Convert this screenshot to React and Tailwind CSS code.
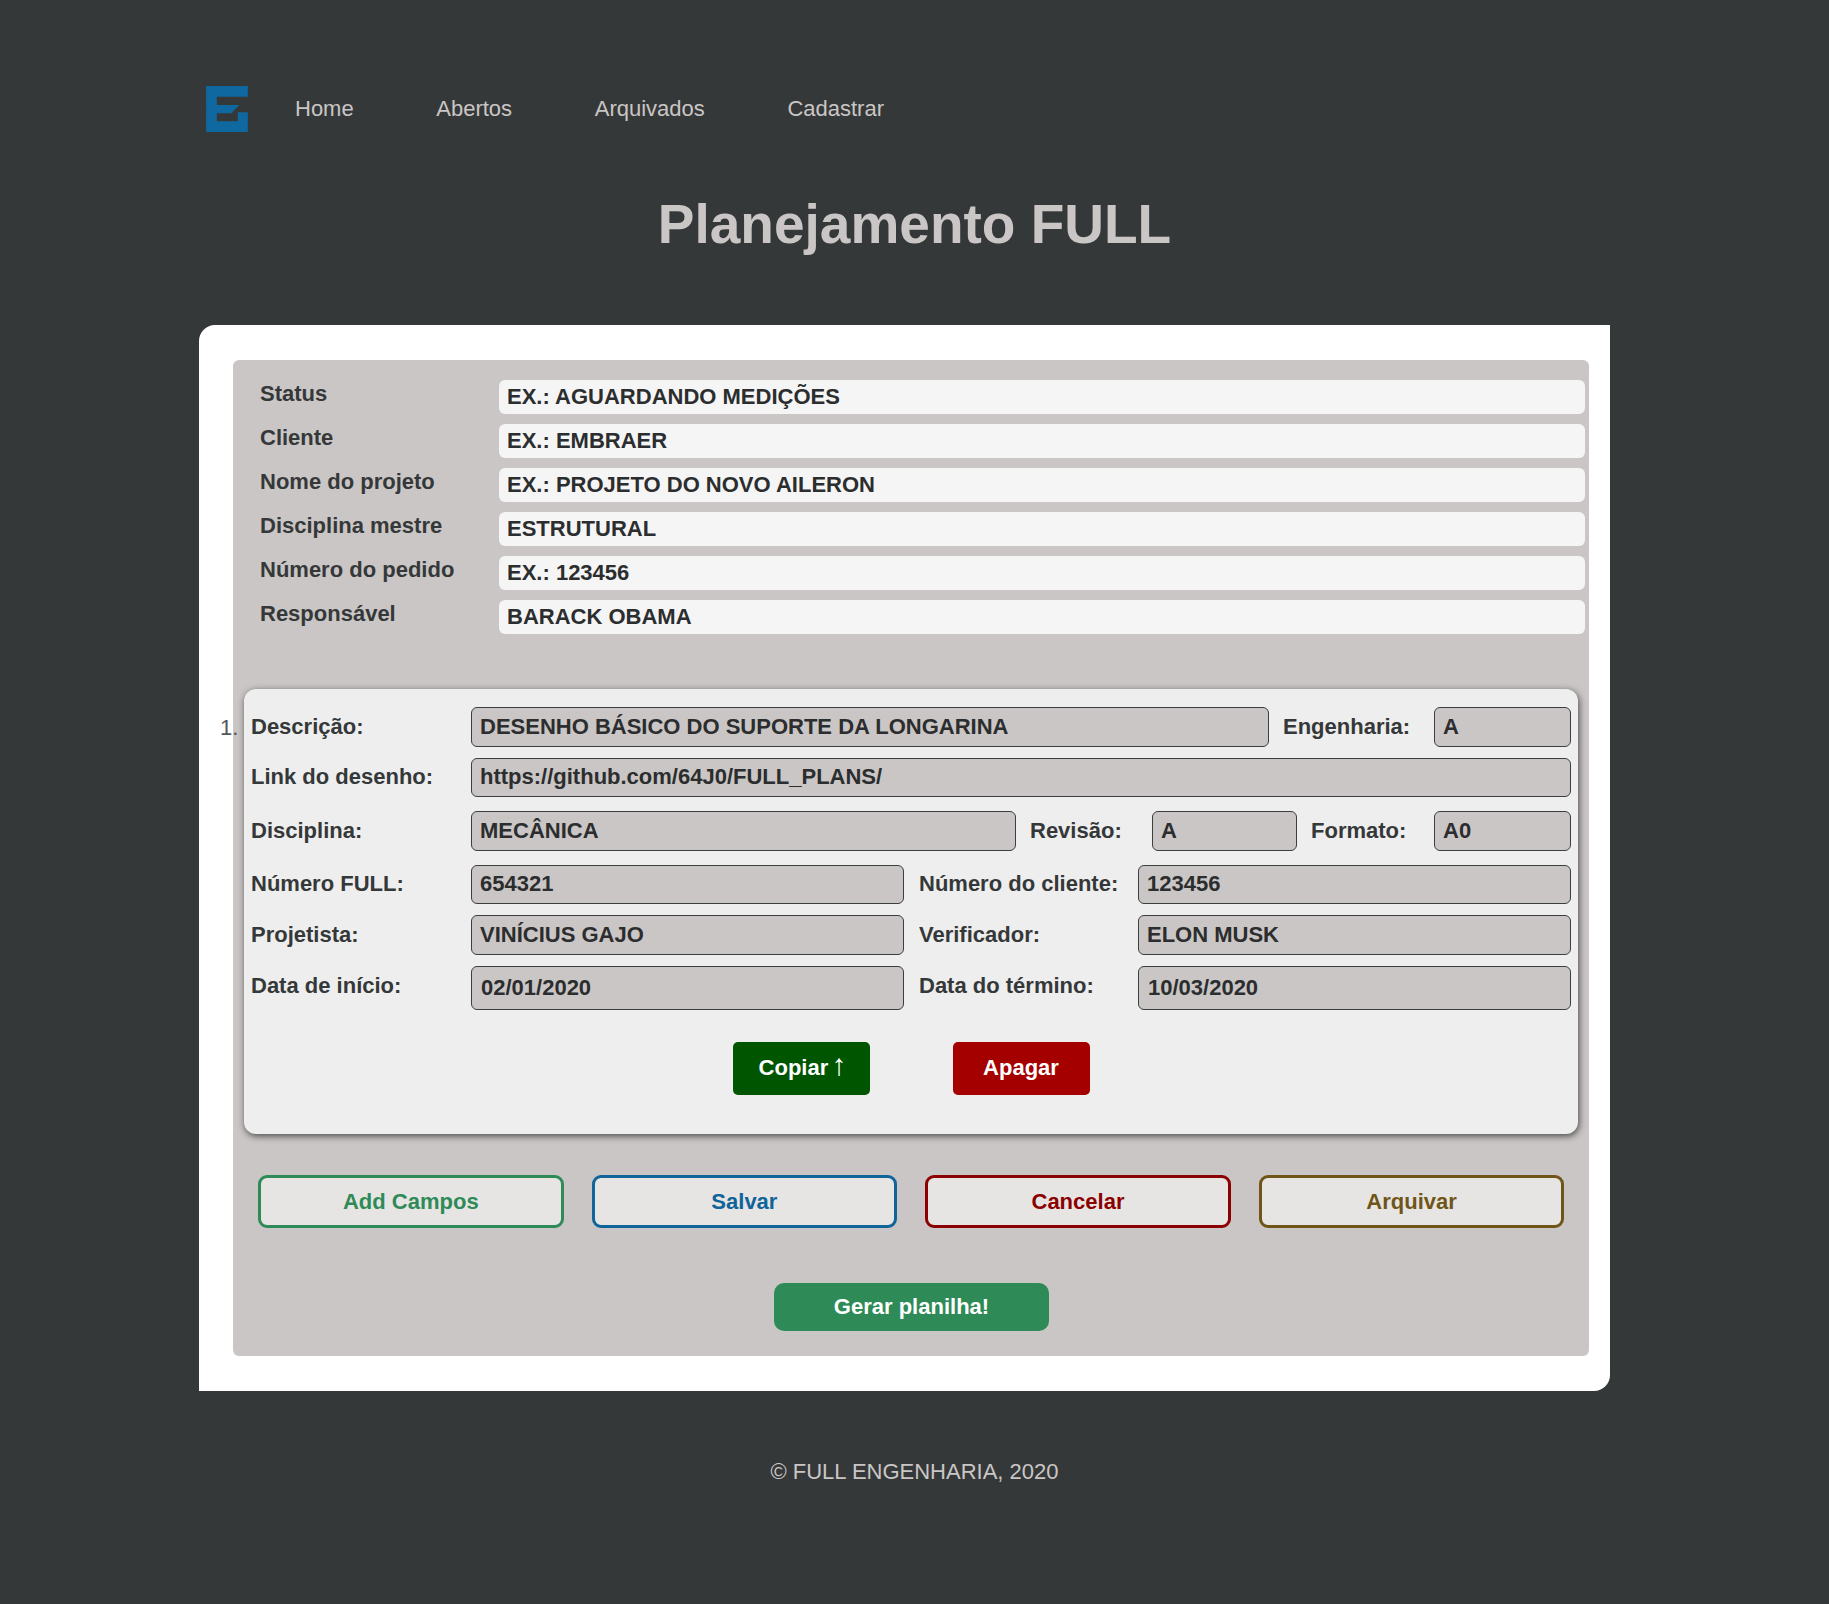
const statusRows = [
  ["Status", "EX.: AGUARDANDO MEDIÇÕES"],
  ["Cliente", "EX.: EMBRAER"],
  ["Nome do projeto", "EX.: PROJETO DO NOVO AILERON"],
  ["Disciplina mestre", "ESTRUTURAL"],
  ["Número do pedido", "EX.: 123456"],
  ["Responsável", "BARACK OBAMA"],
];

const navLinks = ["Home", "Abertos", "Arquivados", "Cadastrar"];

function Logo() {
  return (
    <svg width="42" height="46" viewBox="0 0 125 138" className="shrink-0">
      <path
        fill="#0f689f"
        d="M0 0H125V32H32V106H95V79H125V138H0Z M32 57H100L75 82H32Z"
      />
    </svg>
  );
}

function Box({ className = "", children }) {
  return (
    <div className={`flex items-center rounded-[6px] border border-[#3c3f40] bg-[#cac6c5] pb-[2px] pl-2 text-[#2b2d2e] ${className}`}>
      {children}
    </div>
  );
}

function Label({ className = "", children }) {
  return <span className={`shrink-0 pb-[2px] text-[#353839] ${className}`}>{children}</span>;
}

function OutlineButton({ className = "", children }) {
  return (
    <button className={`h-[53px] w-[305.6px] rounded-[9px] border-[3px] bg-[#e7e5e4] font-bold ${className}`}>
      {children}
    </button>
  );
}

export default function App() {
  return (
    <div className="min-h-[1604px] bg-[#353839] text-[22px] text-[#cac6c5] [font-family:'Liberation_Sans',Arial,sans-serif]">
      <header className="flex items-center pl-[206px] pt-[86px]">
        <Logo />
        <nav className="ml-[47px] flex gap-[82.6px] pb-[2px]">
          {navLinks.map((link) => (
            <a key={link} href="#" className="text-[#cac6c5]">{link}</a>
          ))}
        </nav>
      </header>

      <h1 className="mt-[59px] h-[66px] text-center text-[55px] font-bold leading-[66px]">
        Planejamento FULL
      </h1>

      <main className="ml-[199px] mt-[68px] w-[1411px] rounded-tl-[16px] rounded-br-[16px] bg-white pb-[35px] pl-[34px] pr-[21px] pt-[35px]">
        <section className="rounded-[6px] bg-[#cac6c5] pb-[25px] pl-[25px] pr-[4px] pt-[20px] font-bold">
          {/* Dados do projeto */}
          <div className="flex flex-col gap-[10px] pl-[2px]">
            {statusRows.map(([label, value]) => (
              <div key={label} className="flex items-start">
                <span className="w-[239px] shrink-0 text-[#353839] leading-[28px]">{label}</span>
                <div className="flex h-[34px] flex-1 items-center rounded-[6px] bg-[#f5f5f5] pb-[2px] pl-2 text-[#2b2d2e]">
                  {value}
                </div>
              </div>
            ))}
          </div>

          {/* Desenho 1 */}
          <div className="relative -ml-[14px] mr-[7px] mt-[55px] rounded-[12px] bg-[#eeeeee] pb-[39px] pl-[7px] pr-[7px] pt-[18px] shadow-[1px_2px_7px_rgba(0,0,0,0.65)]">
            <span className="absolute -left-[24px] top-[22px] font-normal text-[#55585a]">1.</span>

            <div className="flex h-[40px] items-center">
              <Label className="w-[220px]">Descrição:</Label>
              <Box className="h-full w-[798px]">DESENHO BÁSICO DO SUPORTE DA LONGARINA</Box>
              <Label className="ml-[14px] w-[151px]">Engenharia:</Label>
              <Box className="h-full flex-1">A</Box>
            </div>

            <div className="mt-[11px] flex h-[39px] items-center">
              <Label className="w-[220px]">Link do desenho:</Label>
              <Box className="h-full flex-1">https://github.com/64J0/FULL_PLANS/</Box>
            </div>

            <div className="mt-[14px] flex h-[40px] items-center">
              <Label className="w-[220px]">Disciplina:</Label>
              <Box className="h-full w-[545px]">MECÂNICA</Box>
              <Label className="ml-[14px] w-[122px]">Revisão:</Label>
              <Box className="h-full w-[145px]">A</Box>
              <Label className="ml-[14px] w-[123px]">Formato:</Label>
              <Box className="h-full flex-1">A0</Box>
            </div>

            <div className="mt-[14px] flex h-[39px] items-center">
              <Label className="w-[220px]">Número FULL:</Label>
              <Box className="h-full w-[433px]">654321</Box>
              <Label className="ml-[15px] w-[219px]">Número do cliente:</Label>
              <Box className="h-full flex-1">123456</Box>
            </div>

            <div className="mt-[11px] flex h-[40px] items-center">
              <Label className="w-[220px]">Projetista:</Label>
              <Box className="h-full w-[433px]">VINÍCIUS GAJO</Box>
              <Label className="ml-[15px] w-[219px]">Verificador:</Label>
              <Box className="h-full flex-1">ELON MUSK</Box>
            </div>

            <div className="mt-[11px] flex h-[44px] items-start">
              <Label className="w-[220px] leading-[39px]">Data de início:</Label>
              <Box className="h-full w-[433px] pl-[9px]">02/01/2020</Box>
              <Label className="ml-[15px] w-[219px] leading-[39px]">Data do término:</Label>
              <Box className="h-full flex-1 pl-[9px]">10/03/2020</Box>
            </div>

            <div className="mt-[32px] flex justify-center gap-[83px]">
              <button className="h-[53px] w-[137px] rounded-[5px] bg-[#005500] pb-[2px] font-bold text-white">
                Copiar <span className="-mx-[3px] inline-block text-[30px] font-normal leading-[0]">↑</span>
              </button>
              <button className="h-[53px] w-[137px] rounded-[5px] bg-[#a50000] pb-[2px] font-bold text-white">Apagar</button>
            </div>
          </div>

          <div className="mt-[41px] flex gap-[28px]">
            <OutlineButton className="border-[#2e8b57] text-[#2e8b57]">Add Campos</OutlineButton>
            <OutlineButton className="border-[#0f6499] text-[#0f6499]">Salvar</OutlineButton>
            <OutlineButton className="border-[#8b0000] text-[#8b0000]">Cancelar</OutlineButton>
            <OutlineButton className="border-[#6f5518] text-[#6f5518]">Arquivar</OutlineButton>
          </div>

          <div className="mt-[55px] flex justify-center pr-[20px]">
            <button className="h-[48px] w-[275px] rounded-[10px] bg-[#2e8b57] pb-[2px] font-bold text-white">Gerar planilha!</button>
          </div>
        </section>
      </main>

      <footer className="mt-[68px] text-center leading-[26px]">© FULL ENGENHARIA, 2020</footer>
    </div>
  );
}
